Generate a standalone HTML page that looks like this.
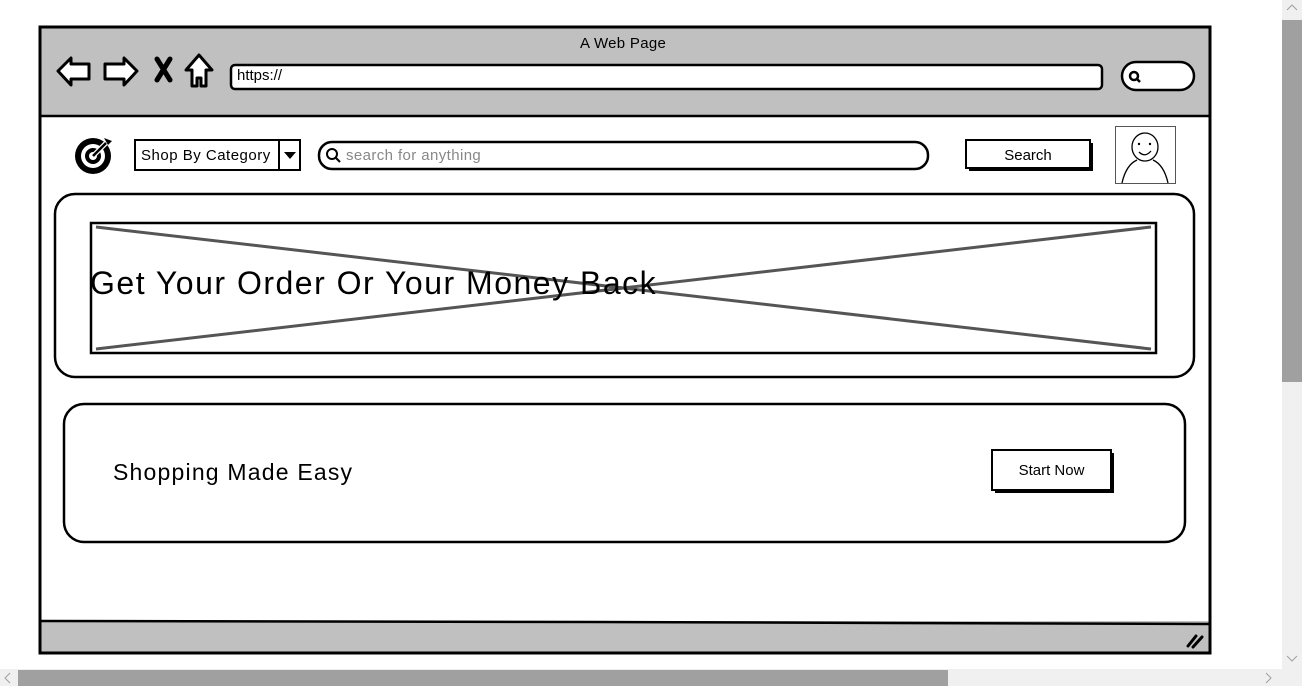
<!DOCTYPE html>
<html><head><style>
html,body{margin:0;padding:0;width:1302px;height:686px;overflow:hidden;background:#fff;font-family:"Liberation Sans",sans-serif;}
.a{position:absolute;white-space:nowrap;}
</style></head><body>
<svg class="a" style="left:0;top:0" width="1302" height="686" viewBox="0 0 1302 686">
<rect x="1282" y="0" width="20" height="669" fill="#f0f0f0"/>
<rect x="1282" y="20" width="20" height="362" fill="#a0a0a0"/>
<path d="M1287 10 L1292 5 L1297 10" stroke="#a0a0a0" fill="none"/>
<path d="M1287 656 L1292 661 L1297 656" stroke="#a0a0a0" fill="none"/>
<rect x="0" y="669" width="1282" height="17" fill="#f0f0f0"/>
<rect x="18" y="670" width="930" height="16" fill="#a0a0a0"/>
<path d="M10 673 L5 678 L10 683" stroke="#a0a0a0" fill="none"/>
<path d="M1266 673 L1271 678 L1266 683" stroke="#a0a0a0" fill="none"/>
<rect x="1282" y="669" width="20" height="17" fill="#f0f0f0"/>
<rect x="40" y="27" width="1170" height="89" fill="#c0c0c0"/>
<rect x="40" y="621" width="1170" height="32" fill="#c0c0c0"/>
<path d="M40 116 L1210 116 M40 621 L600 622 L1210 624" stroke="#000" stroke-width="2.5" fill="none"/>
<rect x="40" y="27" width="1170" height="626" fill="none" stroke="#000" stroke-width="3"/>
<path d="M58 71 L71 58 L71 64 L89 64 L89 79 L71 79 L71 85 Z" fill="#fff" stroke="#000" stroke-width="3" stroke-linejoin="round"/>
<path d="M137 71 L124 58 L124 64 L105 64 L105 79 L124 79 L124 85 Z" fill="#fff" stroke="#000" stroke-width="3" stroke-linejoin="round"/>
<path d="M157 59 L170 80 M170 59 L157 80" stroke="#000" stroke-width="5" stroke-linecap="round"/>
<path d="M199 55 L212 70 L206 70 L206 86 L201 86 L201 78 L197 78 L197 86 L192 86 L192 70 L186 70 Z" fill="#fff" stroke="#000" stroke-width="3" stroke-linejoin="round"/>
<rect x="231" y="65" width="871" height="24" rx="4" fill="#fff" stroke="#000" stroke-width="2.5"/>
<rect x="1122" y="62" width="72" height="28" rx="14" fill="#fff" stroke="#000" stroke-width="2.5"/>
<circle cx="1134" cy="76" r="4" fill="none" stroke="#000" stroke-width="2.5"/>
<path d="M1137 79 L1140 82" stroke="#000" stroke-width="2.5"/>
<path d="M1188 646 L1196 636 M1193 647 L1202 637" stroke="#000" stroke-width="3" stroke-linecap="round"/>
<circle cx="93" cy="156" r="18" fill="#000"/>
<circle cx="93" cy="156" r="12" fill="#fff"/>
<circle cx="93" cy="156" r="8" fill="#000"/>
<circle cx="93" cy="156" r="4" fill="#fff"/>
<path d="M93 156 L106 143" stroke="#fff" stroke-width="5"/>
<path d="M93 156 L106 143" stroke="#000" stroke-width="2.5"/>
<path d="M104 138 L108 145 L112 141 Z" fill="#000"/>
<rect x="135" y="140" width="165" height="30" fill="#fff" stroke="#000" stroke-width="2"/>
<path d="M279 140 L279 170" stroke="#000" stroke-width="2"/>
<path d="M284 152 L296 152 L290 159 Z" fill="#000"/>
<rect x="319" y="142" width="609" height="27" rx="13" fill="#fff" stroke="#000" stroke-width="2.5"/>
<circle cx="332" cy="154" r="5" fill="none" stroke="#000" stroke-width="2"/>
<path d="M336 158 L340 162" stroke="#000" stroke-width="2"/>
<rect x="969" y="143" width="124" height="28" fill="#000"/>
<rect x="966" y="140" width="124" height="28" fill="#fff" stroke="#000" stroke-width="2"/>
<rect x="1115.5" y="126.5" width="60" height="57" fill="#fff" stroke="#555" stroke-width="1"/>
<ellipse cx="1145" cy="147" rx="13" ry="14" fill="none" stroke="#000" stroke-width="1.3"/>
<circle cx="1139" cy="144" r="1.2"/><circle cx="1150" cy="144" r="1.2"/>
<path d="M1139 152 Q1145 158 1151 151" fill="none" stroke="#000" stroke-width="1.3"/>
<path d="M1122 183 Q1126 165 1137 160 M1153 160 Q1164 165 1168 183" fill="none" stroke="#000" stroke-width="1.3"/>
<rect x="55" y="194" width="1139" height="183" rx="20" fill="#fff" stroke="#000" stroke-width="2.5"/>
<rect x="91" y="223" width="1065" height="130" fill="#fff" stroke="#000" stroke-width="2.5"/>
<path d="M96 227 L1151 349 M96 349 L1151 227" stroke="#555" stroke-width="3"/>
<rect x="64" y="404" width="1121" height="138" rx="20" fill="#fff" stroke="#000" stroke-width="2.5"/>
<rect x="995" y="453" width="119" height="40" fill="#000"/>
<rect x="992" y="450" width="119" height="40" fill="#fff" stroke="#000" stroke-width="2"/>
</svg>
<div class="a" style="left:580px;top:35px;font-size:15px;letter-spacing:0.3px;">A Web Page</div>
<div class="a" style="left:237px;top:67px;font-size:15px;">https://</div>
<div class="a" style="left:141px;top:147px;font-size:15px;letter-spacing:0.5px;">Shop By Category</div>
<div class="a" style="left:346px;top:147px;font-size:15px;color:#888;letter-spacing:0.4px;">search for anything</div>
<div class="a" style="left:966px;top:147px;width:124px;text-align:center;font-size:15px;">Search</div>
<div class="a" style="left:90px;top:265px;font-size:32px;letter-spacing:1.5px;">Get Your Order Or Your Money Back</div>
<div class="a" style="left:113px;top:459px;font-size:23px;letter-spacing:1.2px;">Shopping Made Easy</div>
<div class="a" style="left:992px;top:462px;width:119px;text-align:center;font-size:15px;">Start Now</div>
</body></html>
